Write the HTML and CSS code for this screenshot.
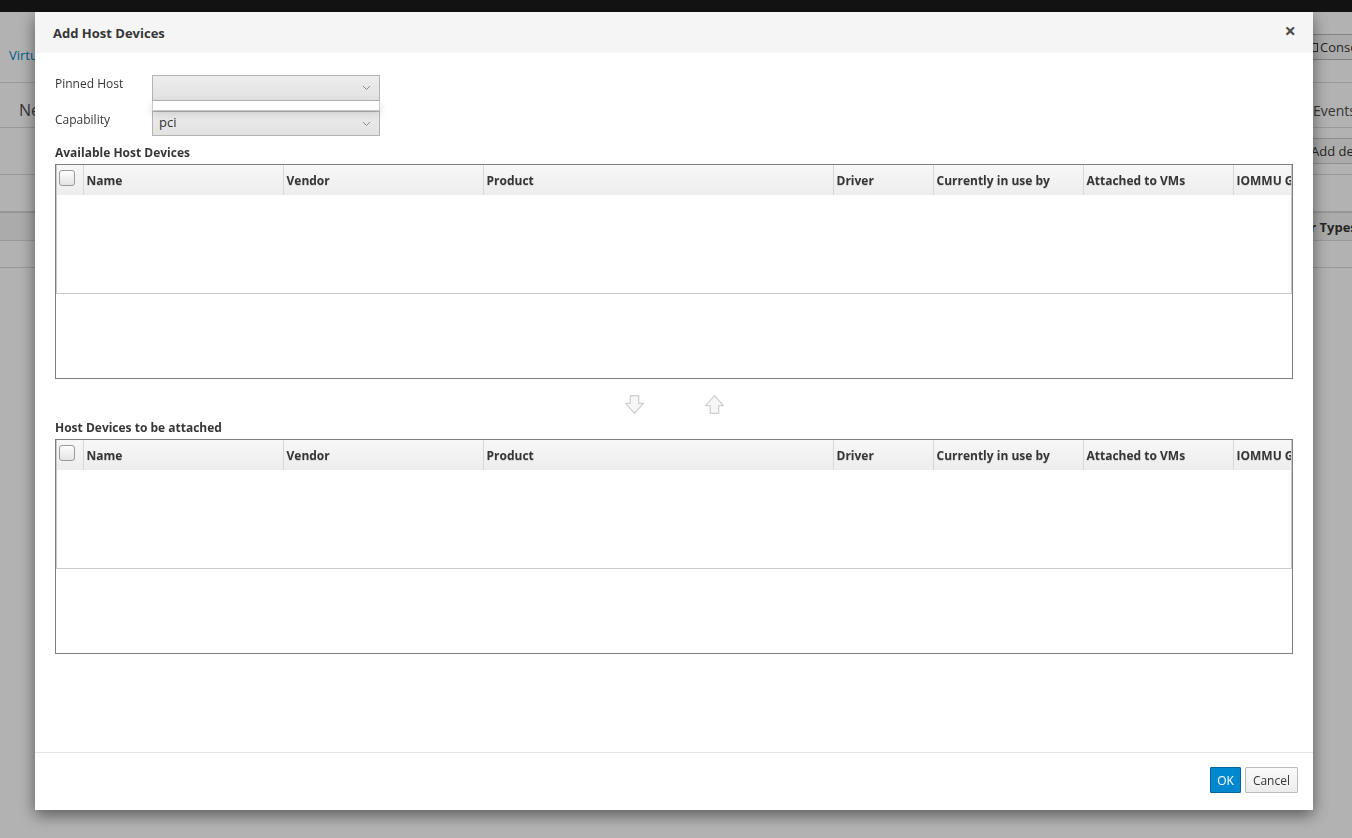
FILE: index.html
```html
<!DOCTYPE html>
<html lang="en">
<head>
    <meta charset="UTF-8">
    <meta name="viewport" content="width=device-width, initial-scale=1.0">
    <title>Add Host Devices</title>
    <link rel="stylesheet" href="styles.css">
</head>
<body>
    <!-- page behind the dialog -->
    <div class="page">
        <div class="topnav"></div>
        <div class="page-row crumbs">
            <div class="cell-left"><a href="#" class="crumb-link">Virtual Machines</a></div>
            <div class="cell-right"><span class="page-btn"><span class="console-icon"></span>Console</span></div>
        </div>
        <div class="page-row tabs">
            <div class="cell-left"><span class="tab-text">New</span></div>
            <div class="cell-right"><span class="tab-text small">Events</span></div>
        </div>
        <div class="page-row toolbar">
            <div class="cell-left"></div>
            <div class="cell-right"><span class="page-btn plain">Add device</span></div>
        </div>
        <div class="page-row spacer"></div>
        <div class="page-row band">
            <div class="cell-left"></div>
            <div class="cell-right"><b>Other Types</b></div>
        </div>
        <div class="page-row thin"></div>
    </div>
    <div class="backdrop"></div>

    <div class="modal">
        <div class="modal-header">
            <h4 class="modal-title">Add Host Devices</h4>
            <span class="close">&times;</span>
        </div>
        <div class="modal-body">
            <div class="form-row">
                <label class="form-label">Pinned Host</label>
                <div class="select-wrap">
                    <div class="select">
                        <span class="select-text"></span>
                        <svg class="chevron" width="9" height="6" viewBox="0 0 9 6"><polyline points="1,1 4.5,4.5 8,1" fill="none" stroke="#8a8a8a" stroke-width="1"/></svg>
                    </div>
                    <div class="popup"></div>
                </div>
            </div>
            <div class="form-row second">
                <label class="form-label">Capability</label>
                <div class="select-wrap">
                    <div class="select">
                        <span class="select-text">pci</span>
                        <svg class="chevron" width="9" height="6" viewBox="0 0 9 6"><polyline points="1,1 4.5,4.5 8,1" fill="none" stroke="#8a8a8a" stroke-width="1"/></svg>
                    </div>
                </div>
            </div>

            <div class="section-title">Available Host Devices</div>
            <div class="grid-box">
                <div class="grid-inner">
                    <table class="grid">
                        <colgroup>
                            <col style="width:26px"><col style="width:200px"><col style="width:200px"><col style="width:350px">
                            <col style="width:100px"><col style="width:150px"><col style="width:150px"><col style="width:150px">
                        </colgroup>
                        <thead>
                            <tr>
                                <th class="check-cell"><span class="checkbox"></span></th>
                                <th>Name</th>
                                <th>Vendor</th>
                                <th>Product</th>
                                <th>Driver</th>
                                <th>Currently in use by</th>
                                <th>Attached to VMs</th>
                                <th>IOMMU Group</th>
                            </tr>
                        </thead>
                    </table>
                </div>
            </div>

            <div class="arrows">
                <svg width="21" height="21" viewBox="0 0 20 20"><polygon points="6,1.5 14,1.5 14,9 18.5,9 10,18.5 1.5,9 6,9" fill="#f6f6f6" stroke="#cfcfcf" stroke-width="1.2" stroke-linejoin="round"/></svg>
                <svg width="21" height="21" viewBox="0 0 20 20"><polygon points="6,18.5 14,18.5 14,11 18.5,11 10,1.5 1.5,11 6,11" fill="#f6f6f6" stroke="#cfcfcf" stroke-width="1.2" stroke-linejoin="round"/></svg>
            </div>

            <div class="section-title">Host Devices to be attached</div>
            <div class="grid-box">
                <div class="grid-inner">
                    <table class="grid">
                        <colgroup>
                            <col style="width:26px"><col style="width:200px"><col style="width:200px"><col style="width:350px">
                            <col style="width:100px"><col style="width:150px"><col style="width:150px"><col style="width:150px">
                        </colgroup>
                        <thead>
                            <tr>
                                <th class="check-cell"><span class="checkbox"></span></th>
                                <th>Name</th>
                                <th>Vendor</th>
                                <th>Product</th>
                                <th>Driver</th>
                                <th>Currently in use by</th>
                                <th>Attached to VMs</th>
                                <th>IOMMU Group</th>
                            </tr>
                        </thead>
                    </table>
                </div>
            </div>
        </div>
        <div class="modal-footer">
            <button class="btn btn-primary">OK</button>
            <button class="btn btn-default">Cancel</button>
        </div>
    </div>
</body>
</html>
```

FILE: styles.css
```css
html, body {
    margin: 0;
    padding: 0;
    height: 100%;
    overflow: hidden;
}
body {
    font-family: "Open Sans", "Liberation Sans", sans-serif;
    font-size: 12px;
    color: #363636;
    background: #fff;
}

/* page behind */
.page {
    width: 1352px;
}
.topnav {
    height: 12px;
    background: #1b1b1b;
}
.page-row {
    display: grid;
    grid-template-columns: 1300px 52px;
    border-bottom: 1px solid #dcdcdc;
    align-items: center;
    overflow: hidden;
    white-space: nowrap;
}
.crumbs {
    height: 70px;
}
.crumbs .cell-left {
    padding: 16px 0 0 9px;
}
.crumb-link {
    color: #0088ce;
    text-decoration: none;
    font-size: 13px;
}
.crumbs .cell-right {
    padding: 0 0 0 5px;
}
.page-btn {
    display: inline-block;
    border: 1px solid #bbb;
    padding: 3px 0 3px 5px;
    font-size: 13px;
    color: #363636;
    background: #f5f5f5;
}
.page-btn.plain {
    border-color: #ccc;
}
.console-icon {
    display: inline-block;
    width: 5px;
    height: 7px;
    border: 1px solid #363636;
    margin-right: 2px;
}
.tabs {
    height: 44px;
}
.tabs .cell-left,
.tabs .cell-right {
    padding-top: 10px;
}
.tab-text {
    font-size: 16px;
    color: #4d4d4d;
    padding-left: 19px;
}
.tab-text.small {
    font-size: 14px;
    padding-left: 13px;
}
.toolbar {
    height: 46px;
}
.toolbar .cell-right {
    padding-left: 5px;
}
.spacer {
    height: 36px;
}
.band {
    height: 27px;
    background: #f5f5f5;
    border-top: 1px solid #d6d6d6;
}
.band .cell-right {
    font-size: 13px;
    padding-left: 0;
    text-indent: -22px;
}
.thin {
    height: 26px;
}
.backdrop {
    position: fixed;
    inset: 0;
    background: rgba(0, 0, 0, 0.3);
}

/* dialog */
.modal {
    position: fixed;
    top: 12px;
    left: 35px;
    width: 1278px;
    height: 798px;
    background: #fff;
    box-shadow: 0 5px 15px rgba(0, 0, 0, 0.5);
    display: flex;
    flex-direction: column;
}
.modal-header {
    height: 41px;
    background: #f5f5f5;
    display: flex;
    align-items: center;
    justify-content: space-between;
    padding: 0 17px 0 18px;
    flex-shrink: 0;
}
.modal-title {
    margin: 0;
    font-size: 13px;
    font-weight: 700;
    color: #363636;
}
.close {
    font-size: 20px;
    font-weight: 700;
    color: #4d4d4d;
    line-height: 1;
    margin-top: -4px;
}
.modal-body {
    flex: 1;
    padding: 22px 20px 0 20px;
}
.form-row {
    display: flex;
    align-items: flex-start;
}
.form-row.second {
    margin-top: 10px;
}
.form-label {
    width: 97px;
    font-size: 12px;
    line-height: 16px;
    padding-top: 1px;
    color: #363636;
}
.select-wrap {
    position: relative;
}
.select {
    width: 226px;
    height: 24px;
    border: 1px solid #b3b3b3;
    background: linear-gradient(#ededed, #e2e2e2);
    display: flex;
    align-items: center;
    justify-content: space-between;
    padding: 0;
}
.form-row.second .select {
    height: 23px;
}
.select-text {
    padding-left: 6px;
    font-size: 13px;
    line-height: 16px;
    margin-top: -4px;
    color: #363636;
}
.chevron {
    margin-right: 8px;
}
.popup {
    position: absolute;
    left: 0;
    top: 26px;
    width: 226px;
    height: 9px;
    background: #fff;
    border: 1px solid #c8c8c8;
    border-top: none;
    box-shadow: 0 3px 8px rgba(0, 0, 0, 0.15);
    z-index: 2;
}
.section-title {
    font-weight: 700;
    font-size: 12px;
    line-height: 16px;
    margin: 9px 0 3px;
    color: #363636;
}
.grid-box {
    height: 213px;
    border: 1px solid #7f7f7f;
}
.grid-inner {
    height: 128px;
    border: 1px solid #c9c9c9;
    border-top: none;
    overflow: hidden;
}
.grid {
    table-layout: fixed;
    border-collapse: collapse;
    width: 1326px;
}
.grid th {
    height: 29px;
    padding: 1px 0 0 3px;
    text-align: left;
    font-weight: 700;
    font-size: 12px;
    color: #363636;
    background: linear-gradient(#f7f7f7, #ededed);
    border-left: 1px solid #d8d8d8;
    white-space: nowrap;
    overflow: hidden;
    text-shadow: 0 1px 1px rgba(0, 0, 0, 0.12);
}
.grid th.check-cell {
    border-left: none;
    padding: 0 0 0 2px;
    vertical-align: top;
}
.checkbox {
    display: block;
    width: 14px;
    height: 14px;
    margin-top: 5px;
    border: 1px solid #9a9a9a;
    border-radius: 3px;
    background: linear-gradient(#fdfdfd, #e4e4e4);
}
.arrows {
    height: 32px;
    display: flex;
    justify-content: center;
    align-items: flex-start;
    gap: 59px;
}
.arrows svg {
    margin-top: 15px;
}
.modal-footer {
    border-top: 1px solid #e5e5e5;
    height: 58px;
    display: flex;
    justify-content: flex-end;
    align-items: flex-start;
    gap: 4px;
    padding: 14px 15px 0 0;
    box-sizing: border-box;
    flex-shrink: 0;
}
.btn {
    height: 26px;
    font-family: "Open Sans", "Liberation Sans", sans-serif;
    font-size: 12px;
    padding: 0 6px;
    border-radius: 1px;
    cursor: pointer;
}
.btn-primary {
    background: #0088ce;
    border: 1px solid #00659c;
    color: #fff;
}
.btn-default {
    padding: 0 7px;
    background: linear-gradient(#fafafa, #ededed);
    border: 1px solid #bbb;
    color: #363636;
}
```
